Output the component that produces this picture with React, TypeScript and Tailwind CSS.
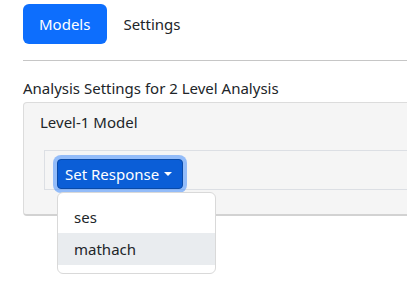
import React from "react";

export default function App() {
  return (
    <div
      className="w-[407px] h-[288px] overflow-hidden bg-white text-[15px] leading-[24px] text-[#212529]"
      style={{ fontFamily: '"Noto Sans", "Open Sans", sans-serif' }}
    >
      <div className="pl-[23px] w-[440px]">
        <nav className="flex pt-1">
          <button className="pl-4 pr-[17px] py-2 rounded-[6px] bg-[#0d6efd] text-white">Models</button>
          <button className="px-4 py-2 text-[#212529]">Settings</button>
        </nav>
        <div className="mt-4 border-t border-[#c6c6c6]" />
        <div className="mt-[15px] h-[24px]">Analysis Settings for 2 Level Analysis</div>
        <div className="mt-[2px] rounded-[4px] border border-b-2 border-[#dcdcdc] border-b-[#d2d2d2] bg-[#f5f5f5] pt-[7px] pb-[24px]">
          <div className="pl-4">Level-1 Model</div>
          <div className="mt-[16px] ml-5 h-[40px] border border-[#dcdfe4] pt-[8px] pl-3">
            <div className="relative inline-block">
              <button className="flex items-center h-[30px] pl-[7px] pr-[10px] rounded-[4px] border border-[#0a4aa8] bg-[#0b5ed7] text-white shadow-[0_0_0_4px_rgba(49,132,253,0.5)]">
                Set Response
                <span className="ml-[5px] inline-block w-0 h-0 border-t-[4px] border-x-[4px] border-x-transparent border-t-white" />
              </button>
              <div className="absolute left-0 top-full mt-[3px] w-[159px] rounded-[6px] border border-[#d9d9d9] bg-white py-2 z-10">
                <div className="px-4 py-1">ses</div>
                <div className="px-4 py-1 bg-[#e9ecef]">mathach</div>
              </div>
            </div>
          </div>
        </div>
      </div>
    </div>
  );
}
